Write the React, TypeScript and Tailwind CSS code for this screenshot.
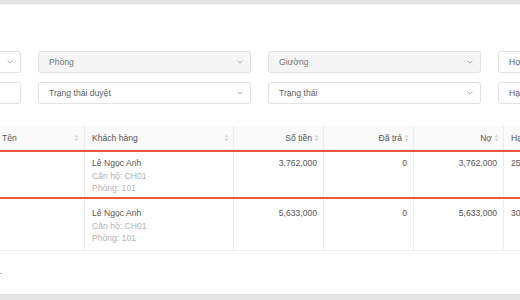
import React from "react";

const Chevron = () => (
  <svg width="6" height="4" viewBox="0 0 6 4" fill="none">
    <path d="M0.6 0.7 L3 3.1 L5.4 0.7" stroke="#a0a0a0" strokeWidth="0.9" />
  </svg>
);

const Sort = () => (
  <svg width="5" height="8" viewBox="0 0 5 8">
    <path d="M2.5 0.6 L4.6 3.2 H0.4 Z" fill="#d6d6d6" />
    <path d="M2.5 7.4 L4.6 4.8 H0.4 Z" fill="#d6d6d6" />
  </svg>
);

function Select({ label, disabled, chevron = true }: { label: string; disabled?: boolean; chevron?: boolean }) {
  return (
    <div
      className={
        disabled
          ? "h-[22px] rounded-[3px] border border-[#e1e1e1] bg-[#f5f5f5] flex items-center justify-between pl-[10px] pr-[7px]"
          : "h-[22px] rounded-[3px] border border-[#e1e1e1] bg-white flex items-center justify-between pl-[10px] pr-[7px]"
      }
    >
      <span className={disabled ? "text-[#767676]" : "text-[#5e5e5e]"}>{label}</span>
      {chevron ? <Chevron /> : null}
    </div>
  );
}

const rows = [
  { name: "Lê Ngọc Anh", apt: "Căn hộ: CH01", room: "Phòng: 101", amount: "3,762,000", paid: "0", debt: "3,762,000", due: "25/06/2024", hl: true },
  { name: "Lê Ngọc Anh", apt: "Căn hộ: CH01", room: "Phòng: 101", amount: "5,633,000", paid: "0", debt: "5,633,000", due: "30/06/2024", hl: false },
];

export default function App() {
  return (
    <div className="w-[520px] h-[300px] overflow-hidden bg-white flex flex-col font-['Liberation_Sans',Arial,sans-serif] text-[8.6px] leading-[12.5px]">
      <div className="h-[4px] shrink-0 bg-[#e4e4e4]" />
      <div className="h-[1px] shrink-0 bg-[#f4f4f4]" />
      <div className="flex-1 overflow-hidden">
        <div className="ml-[-192px] mt-[46px] grid grid-cols-[repeat(4,213px)] gap-x-[17px] gap-y-[9px] w-max">
          <Select label="Tòa nhà" />
          <Select label="Phòng" disabled />
          <Select label="Giường" disabled />
          <Select label="Hợp đồng" />
          <Select label="" chevron={false} />
          <Select label="Trạng thái duyệt" />
          <Select label="Trạng thái" />
          <Select label="Hạn thanh toán" />
        </div>

        <div className="ml-[-5px] mt-[22px] w-max text-[#555]">
          <div className="flex h-[24px] bg-[#fafafa] items-center">
            <div className="w-[90px] h-full border-r border-[#ececec] flex items-center justify-between pl-[7px] pr-[5px]">
              <span>Tên</span>
              <Sort />
            </div>
            <div className="w-[149px] h-full border-r border-[#ececec] flex items-center justify-between pl-[7px] pr-[4px]">
              <span>Khách hàng</span>
              <Sort />
            </div>
            {["Số tiền", "Đã trả", "Nợ"].map((h) => (
              <div key={h} className="w-[90px] h-full border-r border-[#ececec] flex items-center justify-end gap-[2px] pr-[4px]">
                <span>{h}</span>
                <Sort />
              </div>
            ))}
            <div className="w-[140px] h-full flex items-center pl-[7px]">
              <span>Hạn thanh toán</span>
            </div>
          </div>

          {rows.map((r, i) => (
            <div
              key={i}
              className={
                r.hl
                  ? "flex h-[49px] border-y-2 border-[#ef5840]"
                  : "flex h-[52px] border-b border-[#ececec]"
              }
            >
              <div className={r.hl ? "w-[90px] border-r border-[#ececec]" : "w-[90px] border-r border-[#ececec]"} />
              <div className={r.hl ? "w-[149px] border-r border-[#ececec] pl-[7px] pt-[5px]" : "w-[149px] border-r border-[#ececec] pl-[7px] pt-[8px]"}>
                <div className="text-[#555]">{r.name}</div>
                <div className="text-[#b3b3b3]">{r.apt}</div>
                <div className="text-[#b3b3b3]">{r.room}</div>
              </div>
              <div className={r.hl ? "w-[90px] border-r border-[#ececec] text-right pr-[6px] pt-[5px]" : "w-[90px] border-r border-[#ececec] text-right pr-[6px] pt-[8px]"}>
                {r.amount}
              </div>
              <div className={r.hl ? "w-[90px] border-r border-[#ececec] text-right pr-[6px] pt-[5px]" : "w-[90px] border-r border-[#ececec] text-right pr-[6px] pt-[8px]"}>
                {r.paid}
              </div>
              <div className={r.hl ? "w-[90px] border-r border-[#ececec] text-right pr-[6px] pt-[5px]" : "w-[90px] border-r border-[#ececec] text-right pr-[6px] pt-[8px]"}>
                {r.debt}
              </div>
              <div className={r.hl ? "w-[140px] pl-[7px] pt-[5px]" : "w-[140px] pl-[7px] pt-[8px]"}>{r.due}</div>
            </div>
          ))}
        </div>

        <div className="ml-[-198px] w-[200px] mt-[14px] text-right text-[#777] whitespace-nowrap">
          Tổng 2 bản ghi.
        </div>
      </div>
      <div className="h-[6px] shrink-0 bg-[#e4e4e4]" />
    </div>
  );
}
